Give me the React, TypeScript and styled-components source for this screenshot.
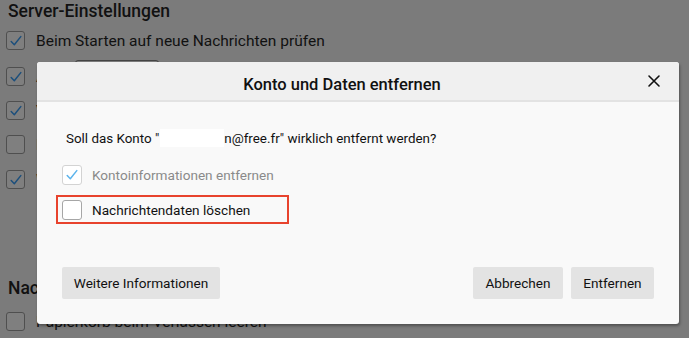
import React from "react";
import styled, { createGlobalStyle } from "styled-components";

const Global = createGlobalStyle`
  html, body { margin: 0; padding: 0; }
  body { font-family: Roboto, "Noto Sans", sans-serif; }
`;

const Page = styled.div`
  position: relative;
  width: 689px;
  height: 338px;
  overflow: hidden;
  background: #7b7b7b;
  padding: 0 0 0 6px;
  box-sizing: border-box;
`;

const Heading = styled.h2<{ $mt: number }>`
  margin: ${(p) => p.$mt}px 0 0 2px;
  font-size: 17.5px;
  font-weight: 500;
  line-height: 22px;
  color: #111;
`;

const BgRow = styled.div<{ $mt?: number }>`
  display: flex;
  align-items: center;
  gap: 11px;
  height: 19px;
  margin-top: ${(p) => p.$mt ?? 15}px;
  color: #111;
  font-size: 15.5px;
`;

const BgBox = styled.span`
  width: 17px;
  height: 17px;
  border: 1px solid #4f4f4f;
  border-radius: 3px;
  background: #7f7f7f;
  display: flex;
  align-items: center;
  justify-content: center;
  flex: none;
`;

const BgInput = styled.span`
  display: inline-block;
  width: 82px;
  height: 20px;
  border: 1px solid #444;
  border-radius: 3px;
  background: #7d7d7d;
  margin-left: 18px;
  margin-top: -12px;
`;

const Check = ({ color }: { color: string }) => (
  <svg width="14" height="14" viewBox="0 0 14 14">
    <path d="M2.2 7.6 L5.3 10.8 L11.8 2.6" fill="none" stroke={color} strokeWidth="1.5" strokeLinecap="round" strokeLinejoin="round" />
  </svg>
);

const Dialog = styled.div`
  position: absolute;
  left: 37px;
  top: 62px;
  width: 642px;
  height: 262px;
  background: #f9f9f9;
  border-radius: 3px;
  box-shadow: 1px 2px 3px rgba(0, 0, 0, 0.35);
  display: flex;
  flex-direction: column;
  overflow: hidden;
`;

const Header = styled.div`
  position: relative;
  height: 38px;
  background: #f0f0f0;
  border-bottom: 2px solid #e3e3e3;
  display: flex;
  align-items: center;
  justify-content: center;
  padding-right: 32px;
  flex: none;
`;

const Title = styled.div`
  font-size: 16.5px;
  font-weight: 500;
  color: #111;
  margin-top: 6px;
`;

const Close = styled.button`
  position: absolute;
  right: 18px;
  top: 12px;
  width: 14px;
  height: 14px;
  padding: 0;
  border: none;
  background: none;
  display: flex;
`;

const Body = styled.div`
  flex: 1;
  padding: 27px 25px 0 25px;
  display: flex;
  flex-direction: column;
`;

const Message = styled.div`
  font-size: 13.4px;
  line-height: 20px;
  color: #111;
  margin-left: 4px;
`;

const Hidden = styled.span`
  display: inline-block;
  width: 64px;
  height: 18px;
  background: #fff;
  vertical-align: -4px;
  margin-left: 1px;
`;

const OptRow = styled.label<{ $highlight?: boolean; $disabled?: boolean }>`
  display: flex;
  align-items: center;
  gap: 10px;
  height: 25px;
  margin: ${(p) => (p.$highlight ? "8px 0 0 -6px" : "13px 0 0 0")};
  padding: ${(p) => (p.$highlight ? "0 0 0 4px" : "0")};
  width: ${(p) => (p.$highlight ? "225px" : "auto")};
  border: ${(p) => (p.$highlight ? "2px solid #e8432d" : "none")};
  font-size: 13.6px;
  color: ${(p) => (p.$disabled ? "#8a8a8a" : "#111")};
`;

const OptBox = styled.span<{ $disabled?: boolean }>`
  width: 18px;
  height: 18px;
  border: 1px solid ${(p) => (p.$disabled ? "#d3d3d3" : "#a6a6a6")};
  border-radius: 3px;
  background: #fff;
  display: flex;
  align-items: center;
  justify-content: center;
  flex: none;
`;

const Footer = styled.div`
  display: flex;
  align-items: center;
  padding: 0 25px 25px 25px;
  gap: 8px;
`;

const Spacer = styled.div`
  flex: 1;
`;

const Button = styled.button<{ $w: number }>`
  height: 32px;
  width: ${(p) => p.$w}px;
  border: none;
  border-radius: 2px;
  background: #e3e3e3;
  font-family: inherit;
  font-size: 13.6px;
  color: #111;
  padding: 0;
`;

export default function App() {
  return (
    <>
      <Global />
      <Page>
        <Heading $mt={0}>Server-Einstellungen</Heading>
        <BgRow $mt={9}>
          <BgBox><Check color="#1c4f7c" /></BgBox>
          <span>Beim Starten auf neue Nachrichten prüfen</span>
        </BgRow>
        <BgRow $mt={17}>
          <BgBox><Check color="#1c4f7c" /></BgBox>
          <span>A</span>
          <BgInput />
        </BgRow>
        <BgRow>
          <BgBox><Check color="#1c4f7c" /></BgBox>
          <span>V</span>
        </BgRow>
        <BgRow>
          <BgBox />
          <span>N</span>
        </BgRow>
        <BgRow $mt={16}>
          <BgBox><Check color="#1c4f7c" /></BgBox>
          <span>W</span>
        </BgRow>
        <Heading $mt={88}>Nachrichtenspeicher</Heading>
        <BgRow $mt={13}>
          <BgBox />
          <span>Papierkorb beim Verlassen leeren</span>
        </BgRow>

        <Dialog>
          <Header>
            <Title>Konto und Daten entfernen</Title>
            <Close aria-label="Schließen">
              <svg width="14" height="14" viewBox="0 0 14 14">
                <path d="M2 2 L12 12 M12 2 L2 12" stroke="#111" strokeWidth="1.6" strokeLinecap="round" />
              </svg>
            </Close>
          </Header>
          <Body>
            <Message>
              Soll das Konto "<Hidden />n@free.fr" wirklich entfernt werden?
            </Message>
            <OptRow $disabled>
              <OptBox $disabled><Check color="#5db4ec" /></OptBox>
              <span>Kontoinformationen entfernen</span>
            </OptRow>
            <OptRow $highlight>
              <OptBox />
              <span>Nachrichtendaten löschen</span>
            </OptRow>
          </Body>
          <Footer>
            <Button $w={158}>Weitere Informationen</Button>
            <Spacer />
            <Button $w={90}>Abbrechen</Button>
            <Button $w={83}>Entfernen</Button>
          </Footer>
        </Dialog>
      </Page>
    </>
  );
}
